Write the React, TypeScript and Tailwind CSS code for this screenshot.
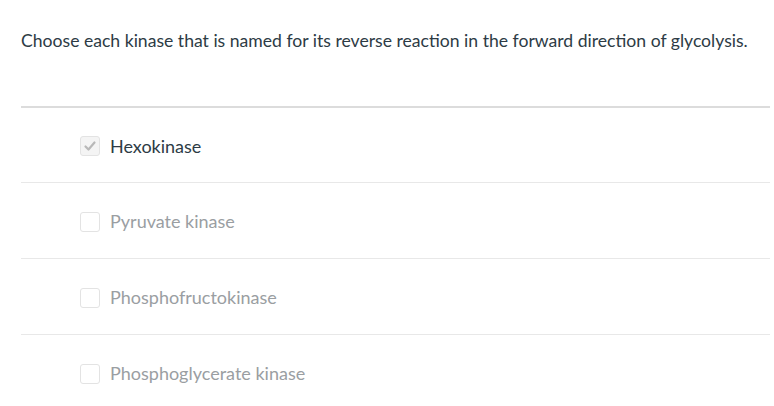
const options = [
  { label: 'Hexokinase', checked: true },
  { label: 'Pyruvate kinase', checked: false },
  { label: 'Phosphofructokinase', checked: false },
  { label: 'Phosphoglycerate kinase', checked: false },
];

function Checkbox({ checked }: { checked: boolean }) {
  return (
    <span
      className={`flex h-5 w-5 shrink-0 items-center justify-center rounded-[3px] border border-[#e3e3e3] ${
        checked ? 'bg-[#f4f4f4]' : 'bg-white'
      }`}
    >
      {checked && (
        <svg width="14" height="14" viewBox="0 0 14 14" fill="none">
          <path d="M2.5 7.5 L5.5 10.5 L11.5 3.5" stroke="#b8b8b8" strokeWidth="2.2" strokeLinecap="round" strokeLinejoin="round" />
        </svg>
      )}
    </span>
  );
}

export default function App() {
  return (
    <div className="min-h-[406px] bg-white pl-[21px] pr-1 pt-[29px] font-['Lato','Liberation_Sans',sans-serif]">
      <p className="text-[17.6px] leading-6 text-[#2d3b45]">
        Choose each kinase that is named for its reverse reaction in the forward direction of glycolysis.
      </p>
      <div className="mt-[53px] border-t-2 border-[#dcdcdc]">
        {options.map((opt, i) => (
          <div
            key={opt.label}
            className={`flex items-center gap-[10px] pl-[59px] pt-[2px] ${
              i > 0 ? 'h-[76px] border-t border-[#e8e8e8]' : 'h-[74px]'
            }`}
          >
            <Checkbox checked={opt.checked} />
            <span className={`text-[18px] ${opt.checked ? 'text-[#2d3b45]' : 'text-[#9a9ea2]'}`}>{opt.label}</span>
          </div>
        ))}
      </div>
    </div>
  );
}
